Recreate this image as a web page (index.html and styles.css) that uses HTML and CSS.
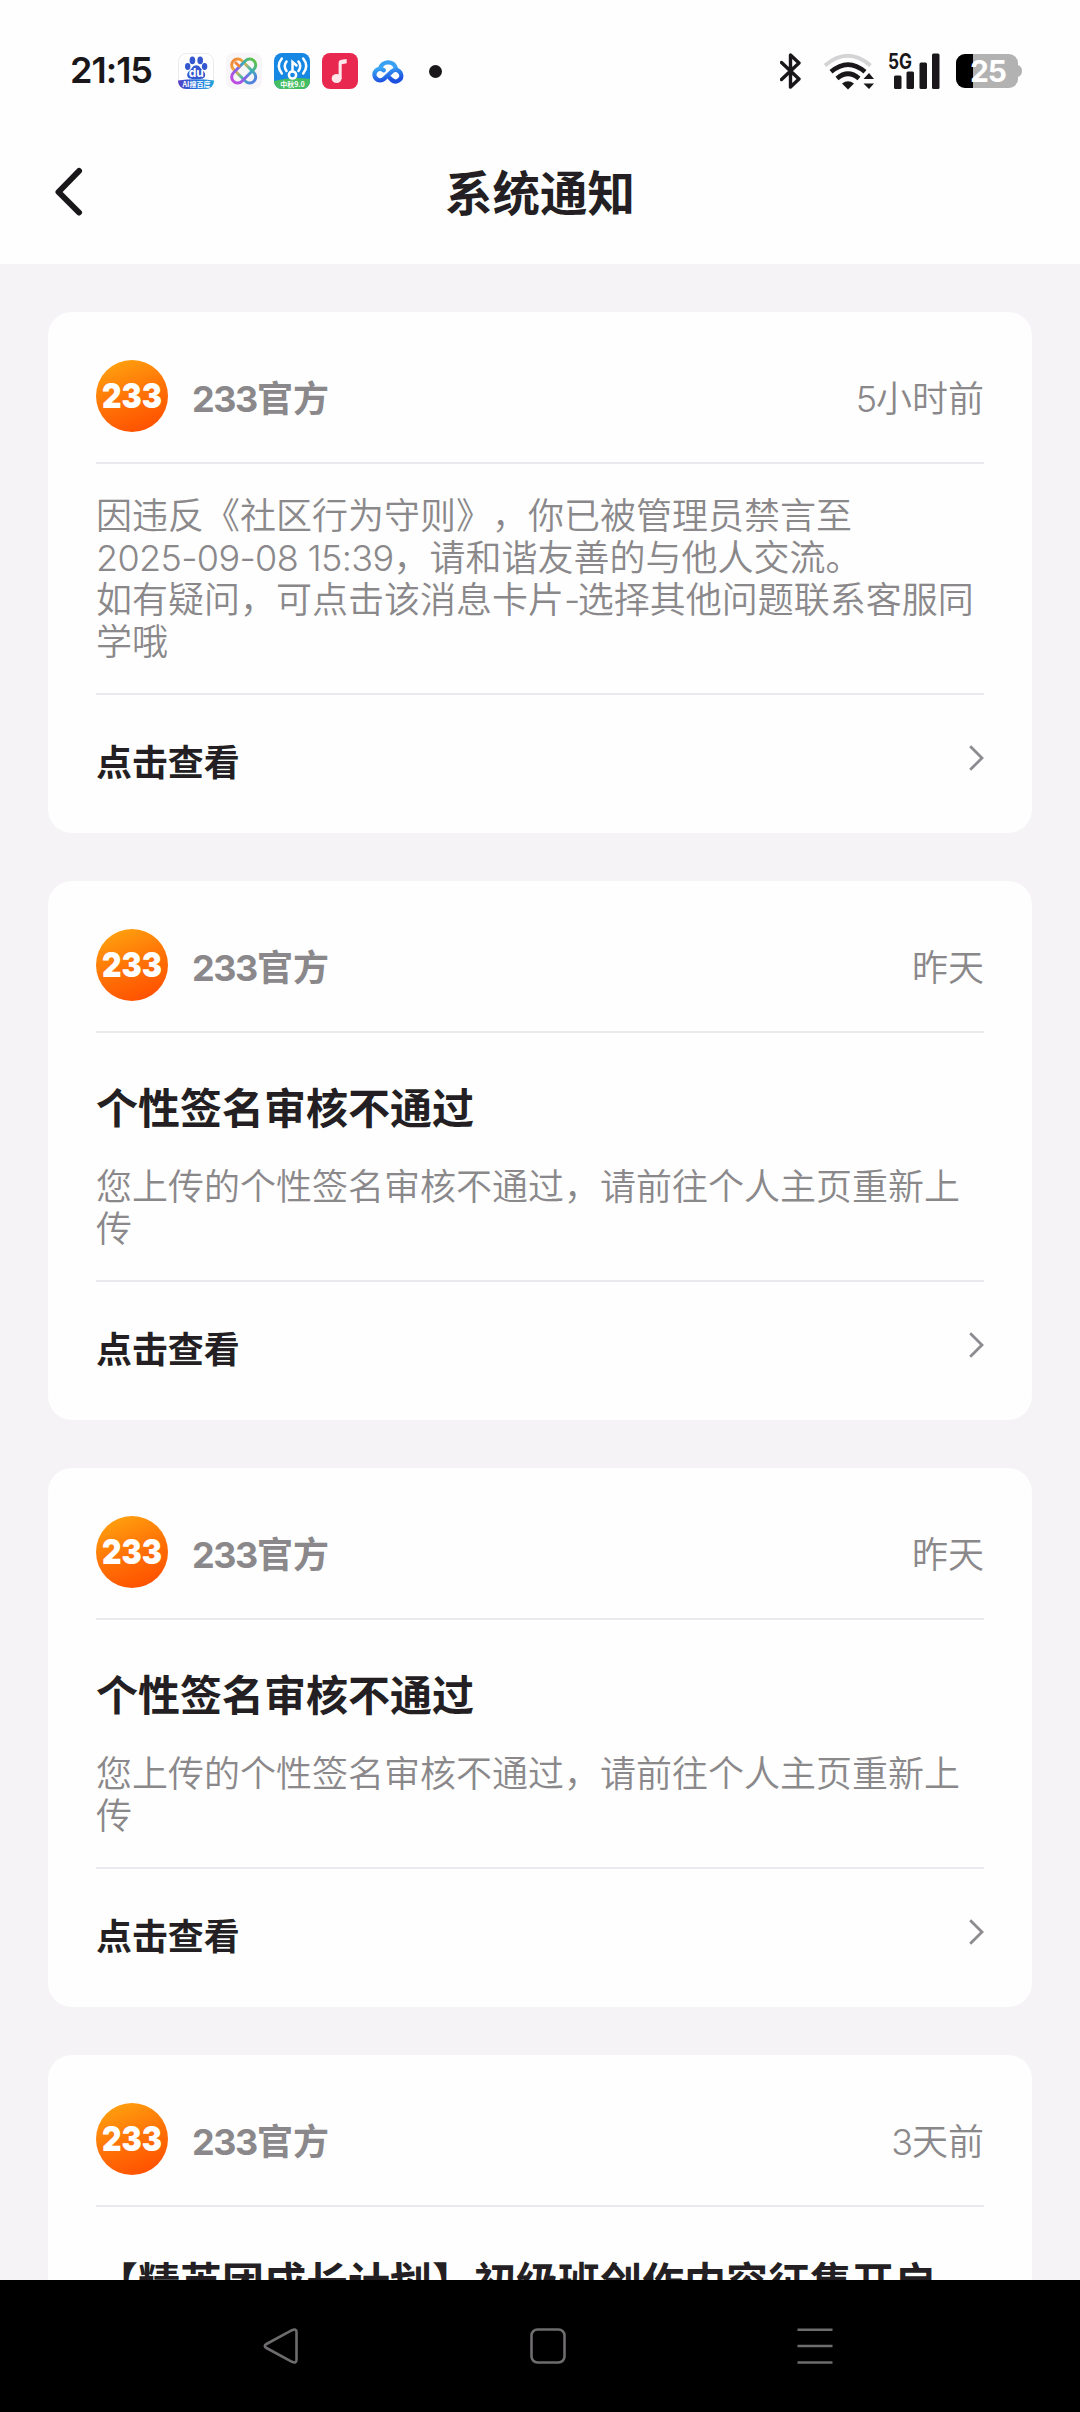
FILE: index.html
```html
<!DOCTYPE html>
<html lang="zh-CN">
<head>
<meta charset="utf-8">
<title>系统通知</title>
<link rel="stylesheet" href="styles.css">
</head>
<body>
<svg class="defs" width="0" height="0" aria-hidden="true">
  <defs>
    <linearGradient id="orange" x1="0.2" y1="0" x2="0.6" y2="1"><stop offset="0" stop-color="#ffa30f"/><stop offset="0.5" stop-color="#ff7607"/><stop offset="1" stop-color="#ff5200"/></linearGradient>
    <symbol id="avatar" viewBox="0 0 72 72">
      <circle cx="36" cy="36" r="36" fill="url(#orange)"/>
      <text x="6" y="48.3" class="avatar-text" textLength="60" lengthAdjust="spacingAndGlyphs">233</text>
    </symbol>
    <symbol id="chevron" viewBox="0 0 16 28"><path d="M2.2 2.2 14 14 2.2 25.8" fill="none" stroke="#8d8b90" stroke-width="2.8"/></symbol>
  </defs>
</svg>
<div class="screen">
  <header class="top">
    <div class="status">
      <span class="clock">21:15</span>
      <div class="apps">
        <svg width="36" height="36" viewBox="0 0 36 36">
          <defs><linearGradient id="bd" x1="0" x2="1"><stop offset="0" stop-color="#5a3fc4"/><stop offset="0.5" stop-color="#1e6fdc"/><stop offset="1" stop-color="#1fa5dc"/></linearGradient></defs>
          <rect x=".5" y=".5" width="35" height="35" rx="8" fill="#fff" stroke="#e9eaee"/>
          <g fill="#3557cf"><ellipse cx="14.4" cy="7.4" rx="2.8" ry="3.8"/><ellipse cx="22.2" cy="7.4" rx="2.8" ry="3.8"/><ellipse cx="9.7" cy="13.5" rx="2.7" ry="3.4"/><ellipse cx="26.6" cy="13.5" rx="2.7" ry="3.4"/><path d="M18.2 12.2c3.3 0 4.200 3 6.300 5 2.300 2.200 3.200 4 2.500 6-1 3-4.500 2.800-8.800 2.800s-7.800.2-8.800-2.800c-.7-2 .2-3.800 2.500-6 2.100-2 3-5 6.300-5z"/></g>
          <text x="18.200" y="24" class="du">du</text>
          <path d="M0 27.500Q18 25 36 27.500V28a8 8 0 0 1-8 8H8a8 8 0 0 1-8-8z" fill="url(#bd)"/>
          <text x="18.500" y="34.200" class="tiny">AI搜百度</text>
        </svg>
        <svg width="36" height="36" viewBox="0 0 36 36">
          <defs><linearGradient id="rb" x1="0" y1="0" x2="0" y2="1"><stop offset="0" stop-color="#f08a3a"/><stop offset="0.3" stop-color="#f2b03d"/><stop offset="0.6" stop-color="#4ab8a6"/><stop offset="1" stop-color="#4f7fe0"/></linearGradient>
          <linearGradient id="rb2" x1="0" y1="1" x2="0" y2="0"><stop offset="0" stop-color="#c04be0"/><stop offset="0.4" stop-color="#7f62e8"/><stop offset="0.65" stop-color="#38a8c8"/><stop offset="1" stop-color="#5cc04a"/></linearGradient></defs>
          <rect width="36" height="36" rx="8" fill="#f7f5f7"/>
          <g fill="none" stroke-width="3"><rect x="11.700" y="3.500" width="12" height="29" rx="6" transform="rotate(-45 17.700 18)" stroke="url(#rb)"/><rect x="11.700" y="3.500" width="12" height="29" rx="6" transform="rotate(45 17.700 18)" stroke="url(#rb2)"/></g>
          <path d="M9 9l5 5" fill="none" stroke="#f0853a" stroke-width="2.600"/>
        </svg>
        <svg width="36" height="36" viewBox="0 0 36 36">
          <defs><clipPath id="r8"><rect width="36" height="36" rx="8"/></clipPath></defs>
          <g clip-path="url(#r8)"><rect width="36" height="36" fill="#1787e4"/><path d="M0 28q18-5 36-2v10H0z" fill="#45bd62"/></g>
          <g fill="none" stroke="#fff" stroke-width="2.500" stroke-linecap="round"><path d="M12.500 8.500q-3.500 4.500 0 9.500M7.800 5.500q-6 7.500 0 15M24.500 8.500q3.500 4.500 0 9.500M29.200 5.500q6 7.500 0 15"/><circle cx="18.500" cy="22" r="3.600"/><path d="M18.500 18V9l4 3.500"/></g>
          <text x="18.500" y="34.300" class="tiny">中秋9.0</text>
        </svg>
        <svg width="36" height="36" viewBox="0 0 36 36">
          <rect width="36" height="36" rx="8" fill="#e8284f"/><ellipse cx="14.600" cy="25.500" rx="4.900" ry="4.500" fill="#ffe6ea"/><path d="M16.600 26V10q0-2.700 2.700-3.200l5.400-.9v4.300l-5 1V26z" fill="#ffe6ea"/>
        </svg>
        <svg width="36" height="36" viewBox="0 0 36 36">
          <defs><linearGradient id="cl" x1="0" y1="0" x2="0.400" y2="1"><stop offset="0" stop-color="#39a7f5"/><stop offset="1" stop-color="#1d4fe0"/></linearGradient></defs>
          <g fill="none" stroke-width="4.400" stroke-linecap="round"><path d="M10.200 15.500a8 7.500 0 0 1 15.600-.5" stroke="#39a0f2"/><path d="M13.800 17.200a5.700 5.700 0 1 0 .2 8.600l7.500-7a5.700 5.700 0 1 1 .3 8.200l-2-2" stroke="url(#cl)"/></g>
        </svg>
        <i class="dot"></i>
      </div>
      <div class="signals">
        <svg width="22" height="36" viewBox="0 0 22 36"><path d="M1.500 9.500 19 26 10.500 34V2L19 10 1.500 26.500" fill="none" stroke="#191719" stroke-width="3.400" stroke-linejoin="round" stroke-linecap="round"/></svg>
        <svg width="50" height="37" viewBox="0 0 50 37">
          <g fill="none"><path d="M1 12.500Q23.500-7 46.500 12.500" stroke="#d4d3d5" stroke-width="4"/><path d="M7 18.800q17-14.500 34 0" stroke="#191719" stroke-width="4.600"/><path d="M13 25.500q11-9.500 22 0" stroke="#191719" stroke-width="4.600"/></g>
          <path d="M18 30.500q6-4.500 12 0L24 36.500zM39.500 26 45 20l5 6zM39.500 30.500h10.500l-5 5.500z" fill="#191719"/>
        </svg>
        <svg width="52" height="38" viewBox="0 0 52 38"><text x="0" y="16.500" class="net" textLength="24" lengthAdjust="spacingAndGlyphs">5G</text><g fill="#191719"><rect x="6" y="23.500" width="7.500" height="13.500" rx="1.500"/><rect x="18.500" y="19.500" width="7.500" height="17.500" rx="1.500"/><rect x="31.500" y="10.500" width="7.500" height="26.500" rx="1.500"/><rect x="44" y="1.500" width="7.500" height="35.500" rx="1.500"/></g></svg>
        <svg width="66" height="34" viewBox="0 0 66 34">
          <defs><clipPath id="bat"><rect width="62" height="34" rx="9"/></clipPath></defs>
          <path d="M61 11h1q4 1.500 4 6t-4 6H61z" fill="#b3b2b3"/><g clip-path="url(#bat)"><rect width="63" height="34" fill="#b3b2b3"/><rect width="17" height="34" fill="#000"/></g>
          <text x="32" y="28" class="pct">25</text>
        </svg>
      </div>
    </div>
    <div class="bar">
      <svg class="back" width="30" height="50" viewBox="0 0 30 50"><path d="M25 4 4.500 25 25 45.500" fill="none" stroke="#191719" stroke-width="6" stroke-linecap="round" stroke-linejoin="round"/></svg>
      <h1>系统通知</h1>
    </div>
  </header>
  <main class="list">
    <article class="card">
      <div class="head"><svg class="face"><use href="#avatar"/></svg><b class="name"><span class="num">233</span>官方</b><time><span class="num">5</span>小时前</time></div>
      <div class="body"><p>因违反《社区行为守则》，你已被管理员禁言至<br><span class="num date">2025-09-08 15:39</span>，请和谐友善的与他人交流。<br>如有疑问，可点击该消息卡片<span class="num dash">-</span>选择其他问题联系客服同<br>学哦</p></div>
      <div class="foot"><b>点击查看</b><svg class="go"><use href="#chevron"/></svg></div>
    </article>
    <article class="card">
      <div class="head"><svg class="face"><use href="#avatar"/></svg><b class="name"><span class="num">233</span>官方</b><time>昨天</time></div>
      <div class="body titled"><h2>个性签名审核不通过</h2><p>您上传的个性签名审核不通过，请前往个人主页重新上<br>传</p></div>
      <div class="foot"><b>点击查看</b><svg class="go"><use href="#chevron"/></svg></div>
    </article>
    <article class="card">
      <div class="head"><svg class="face"><use href="#avatar"/></svg><b class="name"><span class="num">233</span>官方</b><time>昨天</time></div>
      <div class="body titled"><h2>个性签名审核不通过</h2><p>您上传的个性签名审核不通过，请前往个人主页重新上<br>传</p></div>
      <div class="foot"><b>点击查看</b><svg class="go"><use href="#chevron"/></svg></div>
    </article>
    <article class="card">
      <div class="head"><svg class="face"><use href="#avatar"/></svg><b class="name"><span class="num">233</span>官方</b><time><span class="num">3</span>天前</time></div>
      <div class="body titled"><h2>【精英团成长计划】初级班创作内容征集开启</h2></div>
    </article>
  </main>
  <nav class="keys">
    <svg width="36" height="38" viewBox="0 0 36 38"><path d="M3.500 17 29 3.200q4.500-2 4.500 2v27.600q0 4-4.500 2L3.500 21q-3.500-2 0-4z"/></svg>
    <svg width="36" height="38" viewBox="0 0 36 38"><rect x="1.500" y="2.500" width="33" height="33" rx="6"/></svg>
    <svg width="36" height="38" viewBox="0 0 36 38"><path d="M.5 2.800h35M.5 19h35M.5 35.500h35"/></svg>
  </nav>
</div>
</body>
</html>
```
FILE: styles.css
```css
* { box-sizing: border-box; margin: 0; padding: 0; }
body { background: #f5f3f6; font-family: "Noto Sans CJK SC", sans-serif; color: #231f23; text-spacing-trim: space-all; }
svg { display: block; flex: none; }
.defs { position: absolute; }
.screen { width: 1080px; height: 2412px; display: flex; flex-direction: column; overflow: hidden; }

.top { height: 264px; flex: none; background: #fefefe; display: flex; flex-direction: column; }
.status { height: 142px; display: flex; align-items: center; padding: 0 58px 0 70px; }
.clock { font: 600 36px/40px Inter, sans-serif; width: 108px; color: #191719; white-space: nowrap; margin-top: -3px; letter-spacing: -1px; }
.apps { display: flex; align-items: center; gap: 12px; }
.dot { width: 13px; height: 13px; border-radius: 50%; background: #191719; margin-left: 11px; }
.signals { display: flex; align-items: center; margin-left: auto; }
.signals svg:nth-child(2) { margin-left: 22px; }
.signals svg:nth-child(3) { margin-left: 14px; }
.signals svg:nth-child(4) { margin-left: 16px; }
.net { font: 700 21px Inter, sans-serif; fill: #191719; }
.pct { font: 700 30px Inter, sans-serif; fill: #fff; text-anchor: middle; letter-spacing: -1px; }
.du { font: 700 12px Inter, sans-serif; fill: #fff; text-anchor: middle; }
.tiny { font: 700 7px "Noto Sans CJK SC", sans-serif; fill: #fff; text-anchor: middle; }
.avatar-text { font: 900 34px Inter, sans-serif; fill: #fff; }

.bar { flex: 1; display: grid; grid-template-columns: 84px 1fr 84px; align-items: start; }
.back { margin: 25px 0 0 54px; }
.bar h1 { font-size: 47.500px; line-height: 60px; font-weight: 700; text-align: center; margin-top: 19px; }

.list { flex: 1; min-height: 0; overflow: hidden; padding: 48px 48px 0; display: flex; flex-direction: column; gap: 48px; }
.card { flex: none; background: #fefefe; border-radius: 24px; padding: 0 48px; }
.head { height: 152px; padding: 48px 0 30px; border-bottom: 2px solid #ebe9ed; display: flex; align-items: center; color: #8a888a; font-size: 36px; line-height: 42px; }
.face { width: 72px; height: 72px; margin-right: 24px; }
.num { font-family: Inter, "Noto Sans CJK SC", sans-serif; line-height: 0; letter-spacing: -1px; }
.name .num { letter-spacing: -1.400px; }
.date { letter-spacing: -0.650px; }
.dash { letter-spacing: -2.500px; }
.head time { margin-left: auto; font-weight: 350; }
.body { padding: 28px 0 33px; border-bottom: 2px solid #ebe9ed; }
.body p { font-size: 36px; line-height: 42px; font-weight: 350; color: #8a888a; white-space: nowrap; }
.titled { padding-top: 48px; }
.titled h2 { font-size: 42px; line-height: 50px; font-weight: 700; margin-bottom: 32px; white-space: nowrap; }
.foot { height: 138px; padding-bottom: 8px; display: flex; align-items: center; justify-content: space-between; font-size: 36px; line-height: 42px; }
.foot b { letter-spacing: -0.100px; }
.go { width: 16px; height: 28px; margin-top: -4px; }

.keys { height: 132px; flex: none; background: #000; display: flex; justify-content: space-between; align-items: center; padding: 0 247px 0 263px; }
.keys svg { fill: none; stroke: #6e6c6e; stroke-width: 2.6; }
```
